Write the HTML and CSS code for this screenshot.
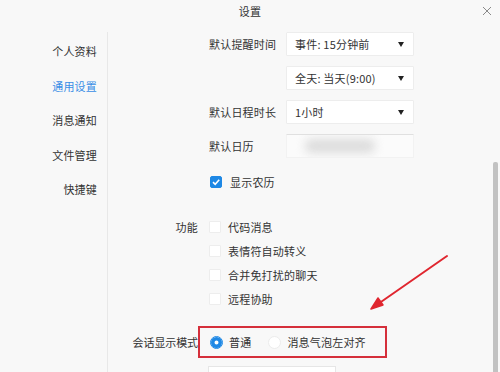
FILE: index.html
```html
<!DOCTYPE html>
<html lang="zh-CN">
<head>
<meta charset="utf-8">
<title>设置</title>
<link rel="stylesheet" href="styles.css">
</head>
<body>
<div class="window">
  <header class="titlebar">
    <span></span>
    <span class="title">设置</span>
    <span class="close">
      <svg width="10" height="10" viewBox="0 0 10 10"><path d="M1 1L9 9M9 1L1 9" stroke="#8a8a8a" stroke-width="1"/></svg>
    </span>
  </header>
  <div class="body">
    <nav class="sidebar">
      <div class="nav-item">个人资料</div>
      <div class="nav-item active">通用设置</div>
      <div class="nav-item">消息通知</div>
      <div class="nav-item">文件管理</div>
      <div class="nav-item">快捷键</div>
    </nav>
    <main class="main">
      <section class="sec1">
        <div class="row">
          <span class="label">默认提醒时间</span>
          <div class="select"><span>事件: 15分钟前</span><i class="caret"></i></div>
        </div>
        <div class="row">
          <span class="label"></span>
          <div class="select"><span>全天: 当天(9:00)</span><i class="caret"></i></div>
        </div>
        <div class="row">
          <span class="label">默认日程时长</span>
          <div class="select"><span>1小时</span><i class="caret"></i></div>
        </div>
        <div class="row">
          <span class="label">默认日历</span>
          <div class="select blurred"><span class="blur"></span></div>
        </div>
      </section>
      <div class="lunar">
        <span class="cb checked">
          <svg width="10" height="10" viewBox="0 0 10 10"><path d="M2 5.2L4.2 7.3L8.2 2.8" fill="none" stroke="#fff" stroke-width="1.6"/></svg>
        </span>
        <span>显示农历</span>
      </div>
      <section class="sec2">
        <div class="frow">
          <span class="label2">功能</span>
          <div class="opt"><span class="cb"></span><span>代码消息</span></div>
        </div>
        <div class="frow">
          <span class="label2"></span>
          <div class="opt"><span class="cb"></span><span>表情符自动转义</span></div>
        </div>
        <div class="frow">
          <span class="label2"></span>
          <div class="opt"><span class="cb"></span><span>合并免打扰的聊天</span></div>
        </div>
        <div class="frow">
          <span class="label2"></span>
          <div class="opt"><span class="cb"></span><span>远程协助</span></div>
        </div>
      </section>
      <div class="mode">
        <span class="label2 tight">会话显示模式</span>
        <div class="radios">
          <span class="radio on"></span><span class="rtext">普通</span>
          <span class="radio"></span><span class="rtext">消息气泡左对齐</span>
        </div>
      </div>
      <div class="lastrow">
        <span class="label2"></span>
        <div class="box"></div>
      </div>
      <svg class="arrow" width="382" height="340" viewBox="0 0 382 340">
        <line x1="339" y1="224" x2="270" y2="272" stroke="#e0262f" stroke-width="2" stroke-linecap="round"/>
        <path d="M263 277L270 266L275 273Z" fill="#e0262f" stroke="#e0262f" stroke-width="1.5" stroke-linejoin="round"/>
      </svg>
    </main>
    <div class="scrolltrack"><div class="thumb"></div></div>
  </div>
</div>
</body>
</html>
```

FILE: styles.css
```css
* { box-sizing: border-box; }
html, body { margin: 0; padding: 0; }
body {
  width: 500px;
  height: 372px;
  overflow: hidden;
  background: #f8f8f8;
  font-family: "Noto Sans CJK SC", "Noto Sans", sans-serif;
  font-size: 11px;
  color: #333;
  letter-spacing: 0.2px;
}
.window { display: flex; flex-direction: column; height: 372px; overflow: hidden; }
.titlebar {
  height: 32px;
  flex: none;
  display: grid;
  grid-template-columns: 1fr auto 1fr;
  align-items: start;
  padding-top: 3px;
}
.title { font-size: 11px; line-height: 16px; color: #333; }
.close { justify-self: end; padding-right: 8px; padding-top: 3px; line-height: 0; }
.body { flex: 1; display: flex; min-height: 0; overflow: hidden; }
.sidebar {
  width: 108px;
  flex: none;
  border-right: 1px solid #e8e8e8;
  padding-top: 2px;
  padding-right: 10px;
  display: flex;
  flex-direction: column;
  align-items: flex-end;
}
.nav-item { height: 34.5px; line-height: 34.5px; color: #333; flex: none; }
.nav-item.active { color: #3a8ee6; }
.main { flex: 1; position: relative; display: flex; flex-direction: column; overflow: hidden; white-space: nowrap; }
.main > * { flex-shrink: 0; }
.sec1 { display: flex; flex-direction: column; gap: 10px; padding-left: 101px; }
.row { display: flex; align-items: center; height: 24px; }
.label { width: 67px; text-align: left; }
.select {
  margin-left: 10px;
  width: 128px;
  height: 24px;
  background: #fff;
  border: 1px solid #ededed;
  border-radius: 1px;
  display: flex;
  align-items: center;
  justify-content: space-between;
  padding: 0 9px 0 8px;
  color: #333;
}
.caret {
  width: 0; height: 0;
  border-left: 3px solid transparent;
  border-right: 3px solid transparent;
  border-top: 5px solid #222;
}
.select.blurred { border-color: #f2f2f2; border-top-color: #e0e0e0; background: #fbfbfb; overflow: hidden; }
.blur {
  width: 70px; height: 14px; margin-left: 10px;
  background: #dcdcdc;
  filter: blur(5px);
  border-radius: 6px;
}
.lunar {
  margin-top: 12px;
  height: 24px;
  display: flex;
  align-items: center;
  gap: 8px;
  padding-left: 102px;
}
.cb {
  width: 12px; height: 12px;
  background: #fff;
  border: 1px solid #ededed;
  border-radius: 1px;
  display: inline-flex;
  align-items: center;
  justify-content: center;
  flex: none;
}
.cb.checked { background: #1e88e5; border-color: #1e88e5; border-radius: 2px; }
.sec2 { margin-top: 21px; display: flex; flex-direction: column; }
.frow { display: flex; align-items: center; height: 24px; }
.label2 { width: 90px; text-align: right; flex: none; }
.opt { margin-left: 11px; display: flex; align-items: center; gap: 7px; }
.mode { margin-top: 15px; display: flex; align-items: center; height: 32px; }
.label2.tight { letter-spacing: -0.1px; }
.radios {
  width: 189px;
  height: 32px;
  border: 2px solid #d52f3b;
  display: flex;
  align-items: center;
  padding-left: 10px;
  flex: none;
}
.radio {
  width: 13px; height: 13px;
  border-radius: 50%;
  background: #fff;
  border: 1px solid #ececec;
  flex: none;
}
.radio.on { background: #fff; border-color: #1e88e5; box-shadow: inset 0 0 0 3.5px #1e88e5; }
.rtext { margin-left: 6px; margin-right: 17px; flex: none; }
.lastrow { margin-top: 8px; display: flex; }
.box {
  margin-left: 10px;
  width: 128px;
  height: 24px;
  background: #fff;
  border: 1px solid #e6e6e6;
}
.arrow { position: absolute; left: 0; top: 0; pointer-events: none; }
.scrolltrack { width: 10px; padding-left: 3px; flex: none; }
.thumb {
  margin-top: 130px;
  width: 5px;
  height: 230px;
  background: #c2c2c2;
  border-radius: 2px;
}
```
